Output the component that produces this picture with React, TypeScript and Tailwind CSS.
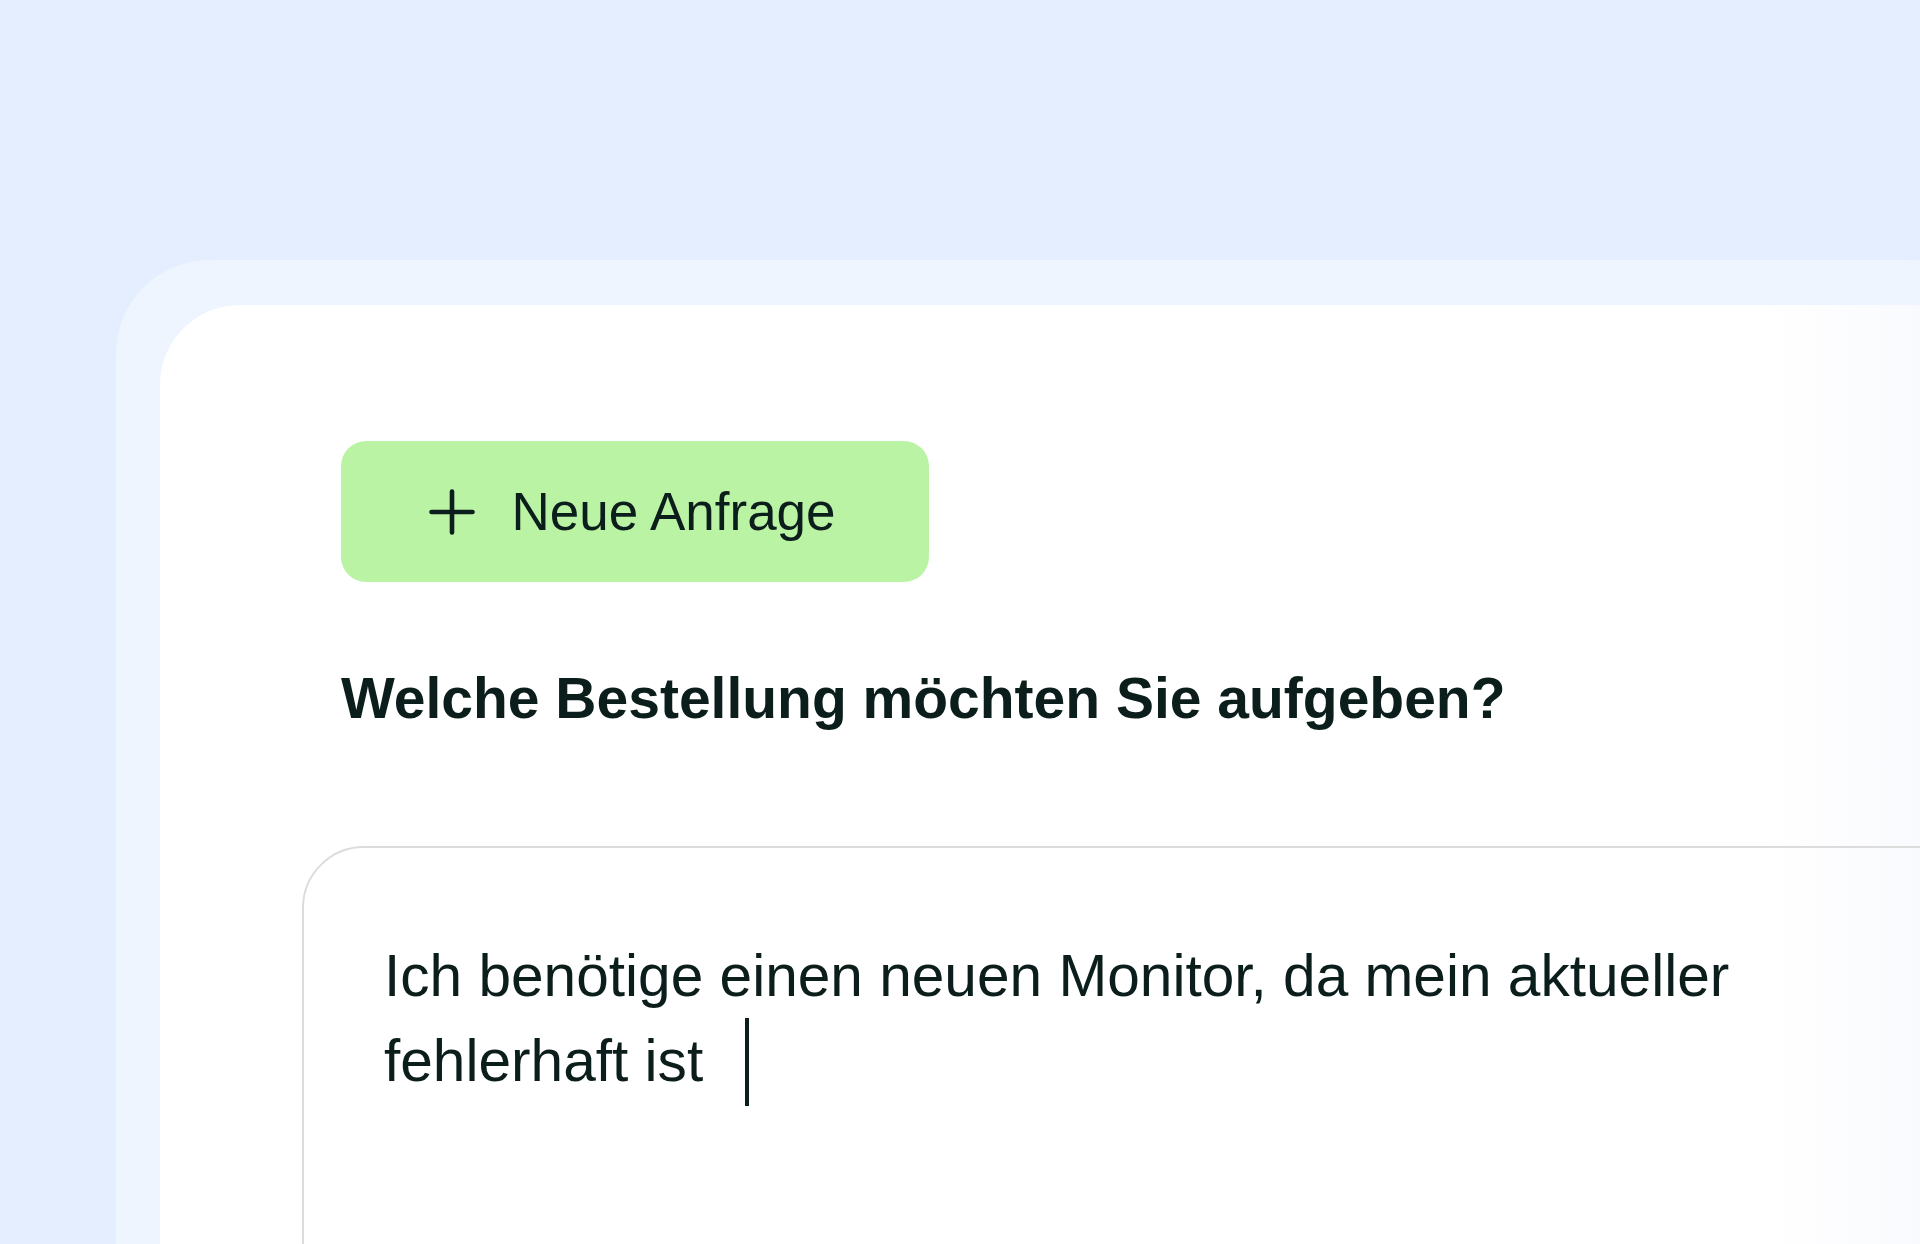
import React from "react";

const ink = "text-[#0b1e1c]";

function PlusIcon() {
  return (
    <svg width="46" height="46" viewBox="0 0 46 46" fill="none" className="shrink-0">
      <path d="M23 2.5v41M2.5 23h41" stroke="#0b1e1c" strokeWidth="4.6" strokeLinecap="round" />
    </svg>
  );
}

export default function App() {
  return (
    <div
      className="h-[1244px] w-full overflow-hidden bg-[#e5eeff] pl-[116px] pt-[260px]"
      style={{ fontFamily: '"Liberation Sans", Arial, sans-serif' }}
    >
      {/* outer frame */}
      <div className="relative h-[1100px] w-[1900px] rounded-tl-[94px] bg-[#eef5ff] pl-[44px] pt-[45px]">
        <div className="absolute right-0 top-0 h-[45px] w-[110px] bg-gradient-to-r from-transparent to-[#f1f3fe]" />

        {/* card */}
        <div className="relative h-[1000px] w-[1800px] rounded-tl-[80px] bg-white pl-[142px] pt-[136px]">
          <div className="pointer-events-none absolute left-[1606px] top-0 h-full w-[160px] bg-gradient-to-r from-white/0 to-[#f9fafe]" />

          <button className="ml-[39px] flex h-[141px] w-[588px] items-center justify-center gap-[36px] rounded-[25px] bg-[#bbf3a5] pr-[5px]">
            <PlusIcon />
            <span className={`text-[53px] leading-none ${ink}`}>Neue Anfrage</span>
          </button>

          <h1 className={`ml-[39px] mt-[88px] text-[57px] font-bold leading-none ${ink}`}>
            Welche Bestellung möchten Sie aufgeben?
          </h1>

          {/* input box */}
          <div className="relative mt-[119px] h-[600px] w-[1700px] rounded-tl-[62px] border-2 border-[#dcdcdc] pl-[80px] pt-[86px]">
            <p className={`w-[1400px] text-[58.6px] leading-[84px] ${ink}`}>
              Ich benötige einen neuen Monitor, da mein aktueller fehlerhaft ist
              <span className="ml-[42px] inline-block h-[88px] w-[4px] bg-[#0b1e1c] align-[-25px]" />
            </p>
          </div>
        </div>
      </div>
    </div>
  );
}
